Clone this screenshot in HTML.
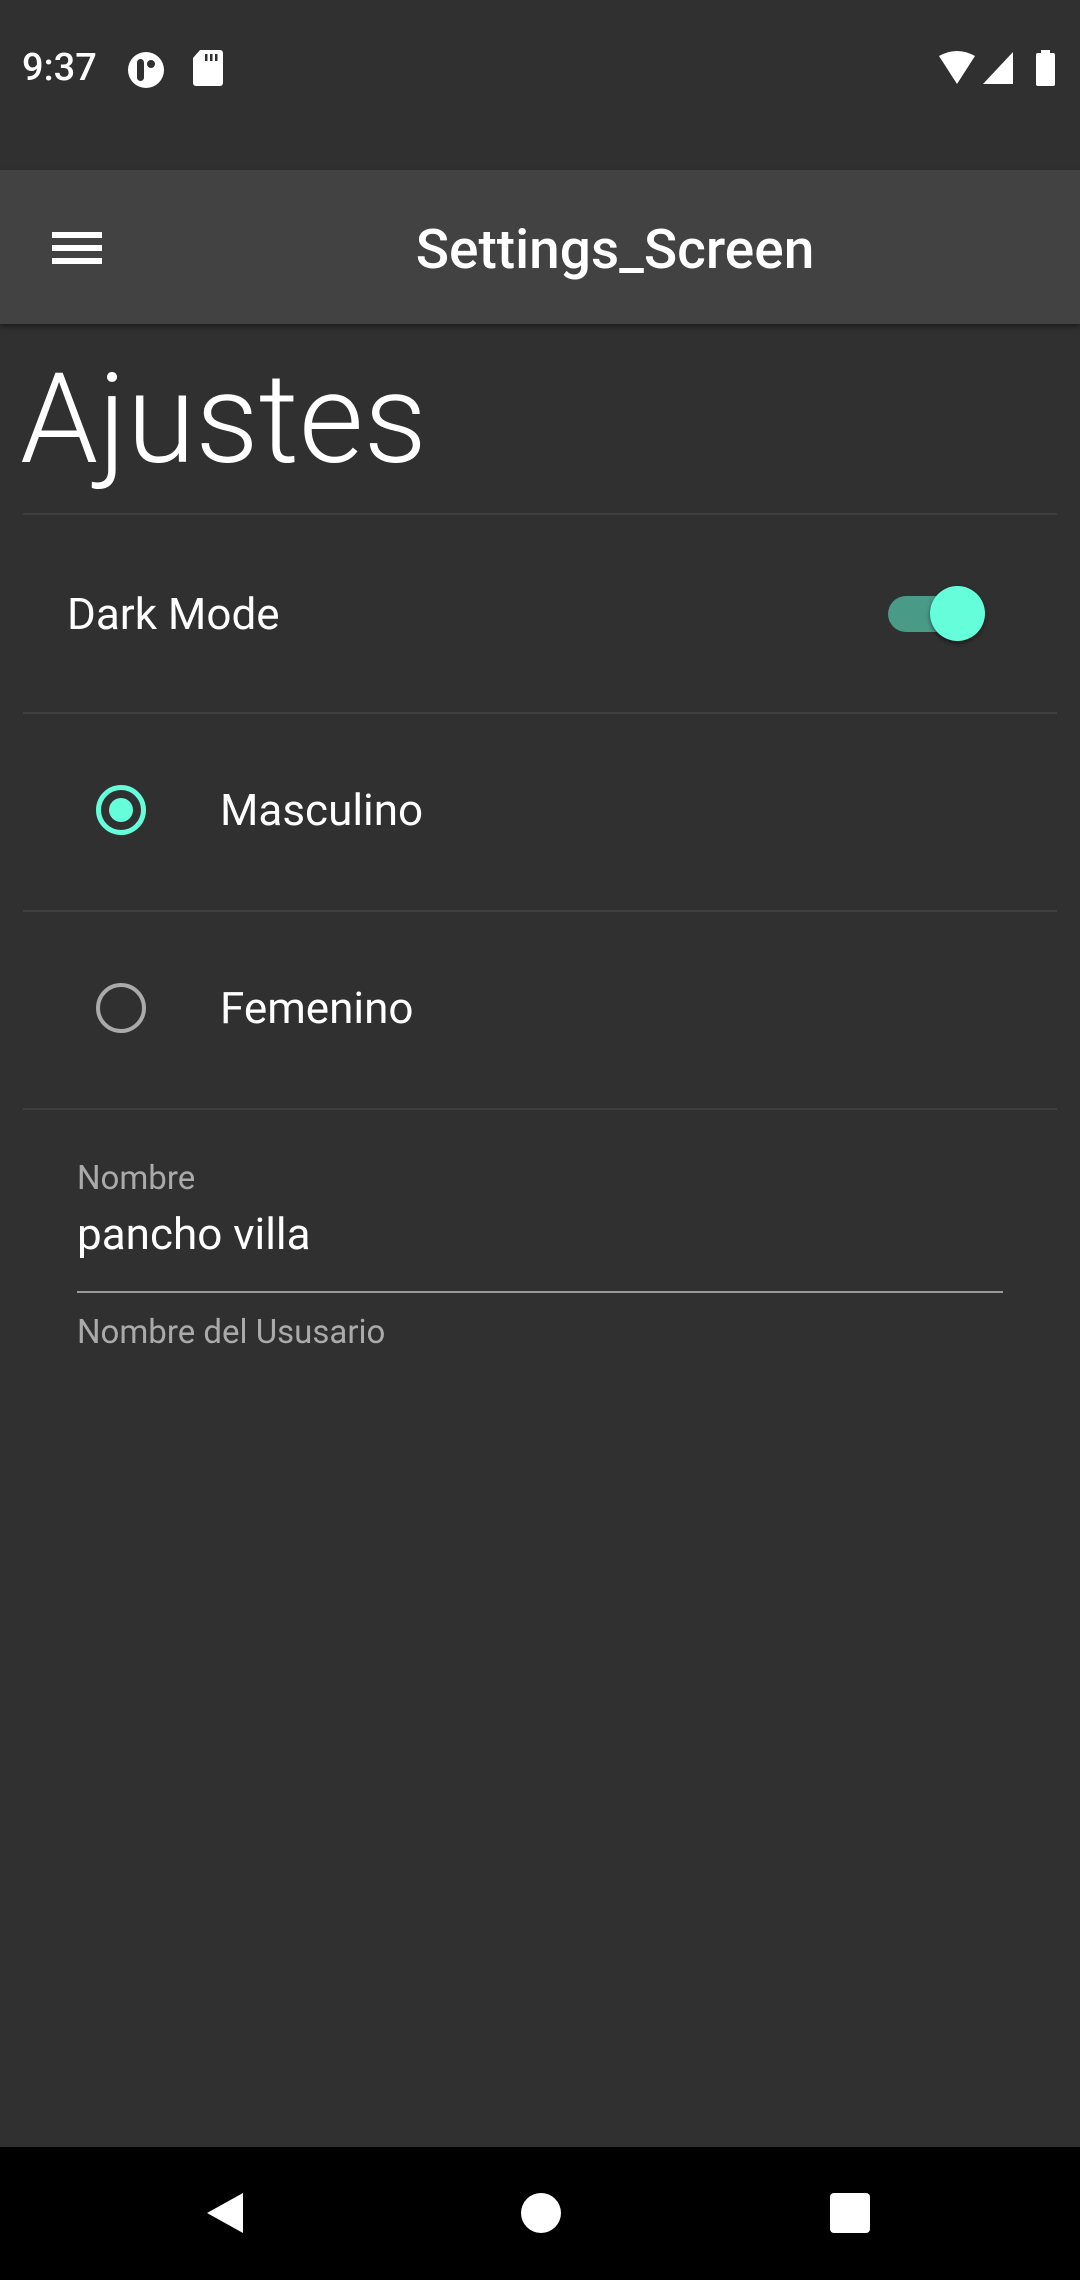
<!DOCTYPE html>
<html><head><meta charset="utf-8"><style>
body{margin:0;width:1080px;height:2280px;background:#303030;position:relative;overflow:hidden;font-family:"Roboto","Liberation Sans",sans-serif;color:#fff}
.a{position:absolute}
.div{position:absolute;left:23px;width:1034px;height:2px;background:#3f3f3f}
</style></head><body>
<div class="a" style="left:22px;top:45px;font-size:38px;font-weight:500;line-height:46px">9:37</div>
<svg class="a" style="left:126px;top:50px" width="40" height="40" viewBox="0 0 40 40"><circle cx="20" cy="20" r="18" fill="#fff"/><rect x="11" y="9" width="7" height="22" rx="3.5" fill="#303030"/><circle cx="25" cy="14" r="4" fill="#303030"/></svg>
<svg class="a" style="left:192px;top:50px" width="32" height="36" viewBox="0 0 32 36"><path d="M8 0h20a3 3 0 0 1 3 3v30a3 3 0 0 1-3 3H4a3 3 0 0 1-3-3V8z" fill="#fff"/><rect x="13" y="4" width="2.5" height="7" fill="#303030"/><rect x="18" y="4" width="2.5" height="7" fill="#303030"/><rect x="23" y="4" width="2.5" height="7" fill="#303030"/></svg>
<svg class="a" style="left:937px;top:50px" width="120" height="36" viewBox="0 0 120 36"><path d="M2 6 Q20 -4 38 6 L20 34Z" fill="#fff"/><path d="M46 34 L76 2 V34Z" fill="#fff"/><rect x="99" y="3" width="19" height="33" rx="2" fill="#fff"/><rect x="104" y="0" width="9" height="4" fill="#fff"/></svg>
<div class="a" style="left:0;top:170px;width:1080px;height:154px;background:#424242;box-shadow:0 3px 6px rgba(0,0,0,.4)"></div>
<div class="a" style="left:52px;top:232px;width:50px;height:6px;background:#fff"></div>
<div class="a" style="left:52px;top:245px;width:50px;height:6px;background:#fff"></div>
<div class="a" style="left:52px;top:258px;width:50px;height:6px;background:#fff"></div>
<div class="a" style="left:0;top:219px;width:1230px;text-align:center;font-size:55px;font-weight:500;line-height:62px">Settings_Screen</div>
<div class="a" style="left:20px;top:345px;font-size:125px;font-weight:300;line-height:150px">Ajustes</div>
<div class="div" style="top:513px"></div>
<div class="a" style="left:67px;top:588px;font-size:44px;line-height:52px">Dark Mode</div>
<div class="a" style="left:888px;top:596px;width:90px;height:36px;border-radius:18px;background:#4a9a88"></div>
<div class="a" style="left:930px;top:586px;width:55px;height:55px;border-radius:50%;background:#64ffda;box-shadow:0 2px 4px rgba(0,0,0,.5)"></div>
<div class="div" style="top:712px"></div>
<div class="a" style="left:96px;top:785px;border:5px solid #64ffda;border-radius:50%;box-sizing:border-box;width:50px;height:50px"></div>
<div class="a" style="left:109px;top:798px;width:24px;height:24px;border-radius:50%;background:#64ffda"></div>
<div class="a" style="left:220px;top:784px;font-size:44px;line-height:52px">Masculino</div>
<div class="div" style="top:910px"></div>
<div class="a" style="left:96px;top:983px;width:50px;height:50px;border:4px solid #aaa;border-radius:50%;box-sizing:border-box"></div>
<div class="a" style="left:220px;top:982px;font-size:44px;line-height:52px">Femenino</div>
<div class="div" style="top:1108px"></div>
<div class="a" style="left:77px;top:1160px;font-size:33px;line-height:38px;color:#aaa">Nombre</div>
<div class="a" style="left:77px;top:1208px;font-size:44px;line-height:52px">pancho villa</div>
<div class="a" style="left:77px;top:1291px;width:926px;height:2px;background:#9a9a9a"></div>
<div class="a" style="left:77px;top:1314px;font-size:33px;line-height:38px;color:#aaa">Nombre del Ususario</div>
<div class="a" style="left:0;top:2147px;width:1080px;height:133px;background:#000"></div>
<svg class="a" style="left:203px;top:2191px" width="44" height="44" viewBox="0 0 44 44"><path d="M40 2V42L4 22Z" fill="#fff"/></svg>
<div class="a" style="left:521px;top:2193px;width:40px;height:40px;border-radius:50%;background:#fff"></div>
<div class="a" style="left:830px;top:2193px;width:40px;height:40px;border-radius:4px;background:#fff"></div>
</body></html>
